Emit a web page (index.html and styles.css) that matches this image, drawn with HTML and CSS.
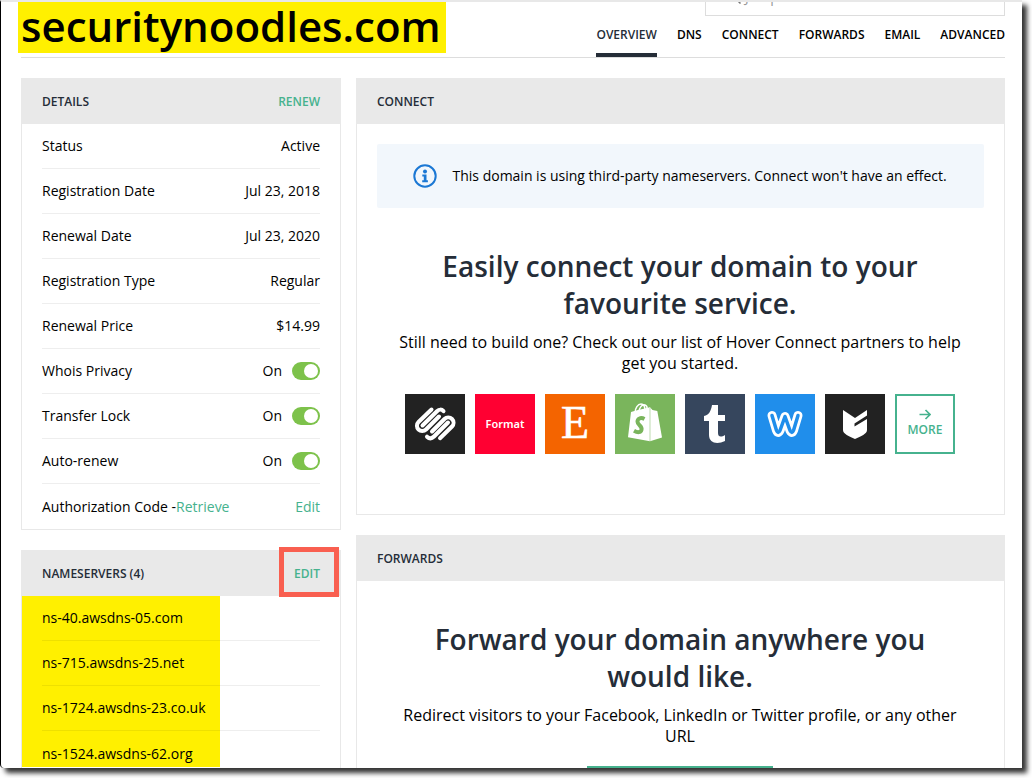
FILE: index.html
```html
<!DOCTYPE html>
<html lang="en">
<head>
<meta charset="utf-8">
<title>securitynoodles.com</title>
<link rel="stylesheet" href="styles.css">
</head>
<body>
<div class="window">
  <header class="top">
    <h1 class="domain">securitynoodles.com</h1>
    <div class="right">
      <div class="search">
        <svg class="lens" width="12" height="12" viewBox="0 0 12 12"><circle cx="5" cy="5" r="4"/><path d="M8 8l3.500 3.500"/></svg>
        <span>Jump to a domain or email</span>
      </div>
      <nav class="tabs">
        <a class="tab active">OVERVIEW</a><a class="tab">DNS</a><a class="tab">CONNECT</a><a class="tab">FORWARDS</a><a class="tab">EMAIL</a><a class="tab">ADVANCED</a>
      </nav>
    </div>
  </header>
  <main class="columns">
    <div class="side">
      <section class="card details">
        <div class="head"><span>DETAILS</span><a>RENEW</a></div>
        <div class="rows">
          <div class="row"><span>Status</span><span>Active</span></div>
          <div class="row"><span>Registration Date</span><span>Jul 23, 2018</span></div>
          <div class="row"><span>Renewal Date</span><span>Jul 23, 2020</span></div>
          <div class="row"><span>Registration Type</span><span>Regular</span></div>
          <div class="row"><span>Renewal Price</span><span>$14.99</span></div>
          <div class="row"><span>Whois Privacy</span><span class="state">On<i class="switch"></i></span></div>
          <div class="row"><span>Transfer Lock</span><span class="state">On<i class="switch"></i></span></div>
          <div class="row"><span>Auto-renew</span><span class="state">On<i class="switch"></i></span></div>
          <div class="row last"><span>Authorization Code -<a>Retrieve</a></span><a>Edit</a></div>
        </div>
      </section>
      <section class="card nameservers">
        <div class="head"><span>NAMESERVERS (4)</span><a class="marked">EDIT</a></div>
        <div class="rows highlighted">
          <div class="row">ns-40.awsdns-05.com</div>
          <div class="row">ns-715.awsdns-25.net</div>
          <div class="row">ns-1724.awsdns-23.co.uk</div>
          <div class="row last">ns-1524.awsdns-62.org</div>
        </div>
      </section>
    </div>
    <div class="content">
      <section class="card connect">
        <div class="head"><span>CONNECT</span></div>
        <div class="notice">
          <svg width="24" height="24" viewBox="0 0 24 24"><circle cx="12" cy="12" r="10.700" fill="none" stroke="#1c78d4" stroke-width="2"/><circle cx="12" cy="7.500" r="2" fill="#1c78d4"/><path d="M9.300 10.500h4.200v5.700h1.400v2H9.200v-2h1.600v-3.700H9.300z" fill="#1c78d4"/></svg>
          <span>This domain is using third-party nameservers. Connect won't have an effect.</span>
        </div>
        <h2>Easily connect your domain to your<br>favourite service.</h2>
        <p>Still need to build one? Check out our list of Hover Connect partners to help<br>get you started.</p>
        <div class="partners">
          <svg class="dark" viewBox="0 0 60 60"><g fill="none" stroke="#fff" stroke-width="4" stroke-linecap="round" stroke-linejoin="round"><path d="M26.500 15.500L13.500 28a5.200 5.200 0 0 0 7.500 7.500L34 22.500"/><path d="M17.500 31.500L32 17.300Q35.500 14 38.500 17.200"/><path d="M27 37.500L39.500 25a5.200 5.200 0 0 1 7.500 7.500L35 44.200"/><path d="M43 28.500L29 42.500Q25.500 46 22 42.700"/></g></svg>
          <div class="format">Format</div>
          <div class="etsy">E</div>
          <svg class="shop" viewBox="0 0 60 60"><path d="M16 18l5-1.500 14-3.300 2.500 2.800 4.800 1L47 43.500l-12 3.800-22-4z" fill="#fff"/><path d="M35 14v33" stroke="#7ab55c" stroke-width=".5"/><path d="M20 19c0-5 3-9 6-9s4 3 4 7M24 18c0-4 3-8 6-7s2 3 2 5" fill="none" stroke="#fff" stroke-width="1.500"/><path d="M29.500 25c-4-2-7-.3-7 2.700 0 3.500 5 3.800 4 8-.7 3-3.800 3.100-7.500 1" fill="none" stroke="#7ab55c" stroke-width="4"/></svg>
          <svg class="tumblr" viewBox="0 0 60 60"><path d="M27 11h6v10h7v6h-7v12c0 4 3 4.500 7 2v6c-8 4-16 2-16-6V27h-5v-5c5-1 7-5 8-11z" fill="#fff"/></svg>
          <svg class="weebly" viewBox="0 0 60 60"><path id="w" d="M17 21.500L21.500 36.500Q23 40.500 25 36.500L30 22.500L35 36.500Q37 40.500 38.500 36.500L43 21.500" fill="none" stroke="#fff" stroke-width="9" stroke-linecap="round" stroke-linejoin="round"/><path d="M17 21.500L21.500 36.500Q23 40.500 25 36.500L30 22.500L35 36.500Q37 40.500 38.500 36.500L43 21.500" fill="none" stroke="#208eeb" stroke-width="3.500" stroke-linecap="round" stroke-linejoin="round"/></svg>
          <svg class="dark" viewBox="0 0 60 60"><path d="M18 16l12 8 12-8v5.500L29.500 29.500v3L42 25v11c0 4-6 6-12 9-6-3-12-5-12-9z" fill="#fff"/></svg>
          <a class="more"><svg width="12" height="11" viewBox="0 0 12 11"><path d="M.5 5.500h10M6.500 1l4.500 4.500L6.500 10" fill="none" stroke="#46b28e" stroke-width="1.700"/></svg>MORE</a>
        </div>
      </section>
      <section class="card forwards">
        <div class="head"><span>FORWARDS</span></div>
        <h2>Forward your domain anywhere you<br>would like.</h2>
        <p>Redirect visitors to your Facebook, LinkedIn or Twitter profile, or any other<br>URL</p>
        <div class="button"></div>
      </section>
    </div>
  </main>
</div>
</body>
</html>
```
FILE: styles.css
```css
* { box-sizing: border-box; }
body { margin: 0; width: 1032px; height: 778px; overflow: hidden; background: #fff; font-family: "Open Sans", sans-serif; font-size: 14px; line-height: 20px; color: #000; }
a { color: #46b28e; }
.window { width: 1022px; height: 768px; overflow: hidden; background: #fff; border-left: 1px solid #000; border-top: 2px solid #e8e8e8; border-bottom-left-radius: 4px; box-shadow: 5px 5px 5px #000c; padding-left: 20px; }
.top { width: 984px; height: 56px; display: flex; justify-content: space-between; border-bottom: 1px solid #ddd; }
.domain { margin: 0 0 0 -3px; width: 428px; height: 51px; padding-left: 3px; background: #fff000; font-size: 42px; line-height: 48px; font-weight: 600; white-space: nowrap; }
.right { display: flex; flex-direction: column; align-items: flex-end; }
.search { width: 300px; height: 14px; border: 1px solid #ddd; border-top: 0; overflow: hidden; display: flex; align-items: flex-start; gap: 4px; padding-left: 23px; color: #999; font-size: 14px; line-height: 2px; }
.search span { margin-top: -6px; }
.lens { margin-top: -10px; flex: none; fill: none; stroke: #777; stroke-width: 1.5; }
.tabs { display: flex; gap: 20px; height: 42px; }
.tab { height: 41px; padding-top: 9px; color: #000; font-size: 12px; line-height: 20px; font-weight: 600; }
.active { color: #252d38; border-bottom: 4px solid #252d38; }
.columns { display: flex; gap: 15px; width: 984px; padding-top: 20px; }
.side { width: 320px; flex: none; display: flex; flex-direction: column; gap: 20px; }
.content { width: 649px; flex: none; display: flex; flex-direction: column; gap: 20px; }
.card { border: 1px solid #e8e8e8; border-top: 0; }
.head { height: 46px; margin: 0 -1px; padding: 2px 21px 0; display: flex; justify-content: space-between; align-items: center; background: #e9e9e9; color: #252d38; font-size: 12px; font-weight: 600; }
.details { height: 452px; }
.rows { padding: 0 20px; }
.row { height: 45px; display: flex; justify-content: space-between; align-items: center; border-bottom: 1px solid #0001; }
.last { border: 0; height: 46px; }
.state { display: flex; align-items: center; gap: 10px; }
.switch { width: 28px; height: 18px; padding: 2px; border-radius: 9px; background: #7dc24b; display: flex; justify-content: flex-end; }
.switch::after { content: ""; width: 14px; height: 14px; border-radius: 50%; background: #fff; }
.nameservers { height: 230px; }
.marked { width: 60px; height: 50px; margin: -4px -19px 0 0; display: flex; align-items: center; justify-content: center; border: 5px solid #f95f50; padding: 3px 4px 0 0; z-index: 1; }
.highlighted { height: 180px; background: linear-gradient(#fff000, #fff000) no-repeat 0 0 / 198px 171px; }
.connect { height: 437px; }
.notice { margin: 20px 20px 0; height: 64px; padding-left: 36px; display: flex; align-items: center; gap: 15.5px; background: #f2f7fc; border-radius: 2px; white-space: nowrap; }
h2 { margin: 40px 1px 0 0; color: #252d38; font-size: 28px; line-height: 37px; font-weight: 600; text-align: center; white-space: nowrap; }
p { margin: 10px 1px 0 0; font-size: 16px; line-height: 21px; text-align: center; white-space: nowrap; }
.partners { display: flex; justify-content: center; gap: 10px; margin: 20px 1px 0 0; }
.partners > * { width: 60px; height: 60px; flex: none; }
.dark { background: #222; }
.format { background: #ff0032; color: #fff; font: 600 11px/60px "Noto Sans", sans-serif; text-align: center; }
.etsy { background: #f46400; color: #fff; font: 46px/58px "Liberation Serif", serif; text-align: center; -webkit-text-stroke: .6px #fff; }
.shop { background: #7ab55c; }
.tumblr { background: #36465d; }
.weebly { background: #208eeb; }
.more { border: 2px solid #46b28e; display: flex; flex-direction: column; align-items: center; justify-content: center; padding-top: 1px; font-size: 12px; line-height: 20px; font-weight: 600; }
.forwards { height: 300px; }
.button { width: 186px; height: 40px; margin: 19px auto 0; background: #46b28e; transform: translateX(-1px); }
```
